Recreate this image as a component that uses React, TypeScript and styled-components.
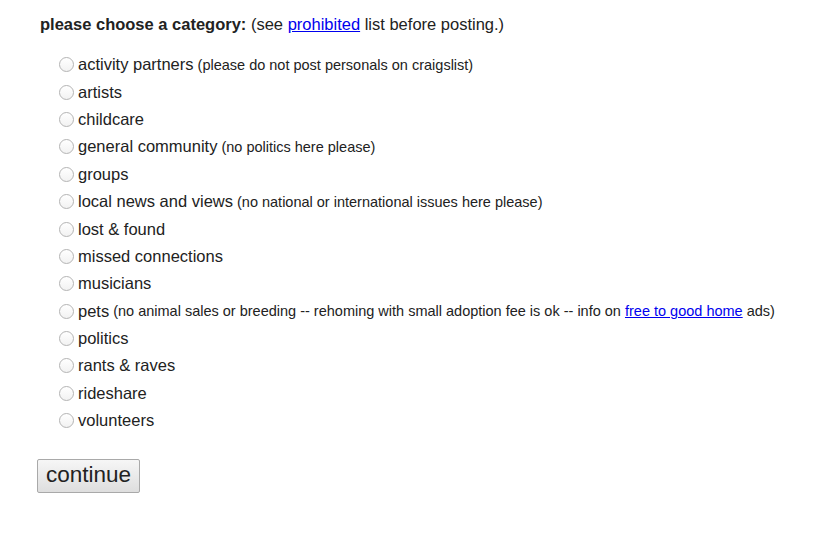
import styled, { createGlobalStyle } from 'styled-components';

const GlobalStyle = createGlobalStyle`
  html, body {
    margin: 0;
    padding: 0;
    background: #ffffff;
  }
  body {
    font-family: "Liberation Sans", Arial, sans-serif;
    color: #222222;
  }
`;

// 페이지 전체
const Page = styled.form`
  padding: 14px 0 0 40px;
  width: 819px;
  height: 539px;
  box-sizing: border-box;
`;

// 상단 안내 문구
const Heading = styled.div`
  font-size: 16.5px;
  line-height: 20px;
  margin: 0 0 17px 0;
`;

const Strong = styled.b`
  font-weight: bold;
`;

const Link = styled.a`
  color: #0000ee;
  text-decoration: underline;
`;

// 카테고리 목록
const CategoryList = styled.div`
  display: flex;
  flex-direction: column;
  padding-left: 19px;
`;

const CategoryRow = styled.label`
  display: flex;
  align-items: center;
  height: 27.4px;
  font-size: 16.5px;
  cursor: default;
`;

// 라디오 버튼
const Radio = styled.input`
  appearance: none;
  width: 15px;
  height: 15px;
  margin: 0 4px 0 0;
  border: 1px solid #b4b4b4;
  border-radius: 50%;
  background: linear-gradient(#ffffff, #f2f2f2);
  box-sizing: border-box;
  flex-shrink: 0;
  &:checked {
    background: radial-gradient(circle, #333 0 3px, #fff 3.5px);
  }
`;

const Name = styled.span`
  font-size: 16.5px;
`;

const Note = styled.span`
  font-size: 14.5px;
  margin-left: 4px;
`;

// 계속 버튼
const ContinueButton = styled.button`
  margin: 25px 0 0 -3px;
  width: 103px;
  height: 34px;
  padding: 0 0 2px 0;
  font-family: "Liberation Sans", Arial, sans-serif;
  font-size: 22.5px;
  color: #222222;
  border: 1px solid #a9a9a9;
  border-radius: 2px;
  background: linear-gradient(#f6f6f6, #dedede);
`;

type Category = { name: string; note?: React.ReactNode };

const categories: Category[] = [
  { name: 'activity partners', note: '(please do not post personals on craigslist)' },
  { name: 'artists' },
  { name: 'childcare' },
  { name: 'general community', note: '(no politics here please)' },
  { name: 'groups' },
  { name: 'local news and views', note: '(no national or international issues here please)' },
  { name: 'lost & found' },
  { name: 'missed connections' },
  { name: 'musicians' },
  {
    name: 'pets',
    note: (
      <>
        (no animal sales or breeding -- rehoming with small adoption fee is ok -- info on{' '}
        <Link href="#">free to good home</Link> ads)
      </>
    ),
  },
  { name: 'politics' },
  { name: 'rants & raves' },
  { name: 'rideshare' },
  { name: 'volunteers' },
];

export default function App() {
  return (
    <>
      <GlobalStyle />
      <Page onSubmit={(e) => e.preventDefault()}>
        <Heading>
          <Strong>please choose a category:</Strong> (see <Link href="#">prohibited</Link> list
          before posting.)
        </Heading>
        <CategoryList>
          {categories.map((item) => (
            <CategoryRow key={item.name}>
              <Radio type="radio" name="id" value={item.name} />
              <Name>{item.name}</Name>
              {item.note && <Note>{item.note}</Note>}
            </CategoryRow>
          ))}
        </CategoryList>
        <ContinueButton type="submit">continue</ContinueButton>
      </Page>
    </>
  );
}
